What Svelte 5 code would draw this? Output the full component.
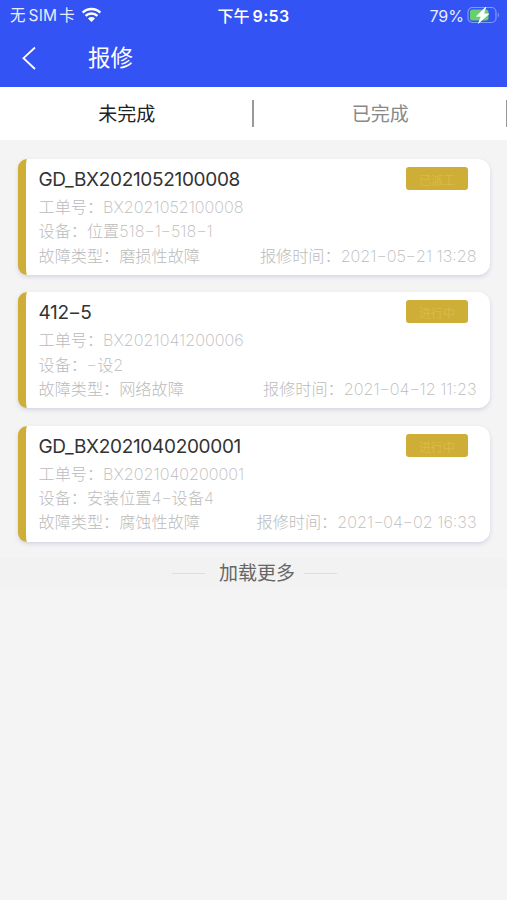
<script>
  const orders = [
    { title: 'GD_BX2021052100008', status: '已派工', no: 'BX2021052100008', device: '位置518-1-518-1', fault: '磨损性故障', time: '2021-05-21 13:28' },
    { title: '412-5', status: '进行中', no: 'BX2021041200006', device: '-设2', fault: '网络故障', time: '2021-04-12 11:23' },
    { title: 'GD_BX2021040200001', status: '进行中', no: 'BX2021040200001', device: '安装位置4-设备4', fault: '腐蚀性故障', time: '2021-04-02 16:33' }
  ];
</script>

<!-- Hyphens are drawn wider than the font's own -->
{#snippet wide(text)}{#each text.split('-') as part, i}{#if i}<span class="dash">-</span>{/if}{part}{/each}{/snippet}

<div class="screen">
  <header>
    <div class="status-bar">
      <div class="carrier">
        <span>无</span><span class="sim">SIM</span><span>卡</span>
        <svg class="wifi" width="21" height="16" viewBox="0 0 21 16">
          <path d="M1.7 5.6a12.6 12.6 0 0 1 17.6 0M4.6 8.8a8.4 8.4 0 0 1 11.8 0" fill="none" stroke="#fff" stroke-width="2.5" />
          <path d="M7 11.5a5 5 0 0 1 7 0L10.500 15z" fill="#fff" />
        </svg>
      </div>
      <div class="clock"><span>下午</span><b>9:53</b></div>
      <div class="power">
        <span>79%</span>
        <svg width="33" height="18" viewBox="0 0 33 18">
          <rect x="1" y="1.500" width="28" height="15" rx="4.500" fill="none" stroke="#8198ff" stroke-width="1.200" />
          <rect x="3" y="3.500" width="18.500" height="11" rx="2.500" fill="#65d06c" />
          <path d="M30.800 6.500c1.600.7 1.600 4.300 0 5z" fill="#8198ff" />
          <path d="M18.800 1 9.500 10.300h4.700L11.600 17.300 21.800 7.900h-5.200z" fill="#fff" stroke="#fff" stroke-width="0.800" />
        </svg>
      </div>
    </div>
    <div class="nav">
      <svg width="16" height="24" viewBox="0 0 16 24"><path d="M14 1.500 2.500 12.200 14 23" fill="none" stroke="#fff" stroke-width="1.800" /></svg>
      <h1>报修</h1>
    </div>
  </header>

  <div class="tabs">
    <div class="tab active"><span>未完成</span></div>
    <div class="tab"><span>已完成</span></div>
  </div>

  <main>
    {#each orders as o}
      <article>
        <div class="head">
          <h2>{@render wide(o.title)}</h2>
          <span class="badge">{o.status}</span>
        </div>
        <div class="row">工单号：<span>{o.no}</span></div>
        <div class="row">设备：<span>{@render wide(o.device)}</span></div>
        <div class="row"><span>故障类型：{o.fault}</span><span class="time">报修时间：{@render wide(o.time)}</span></div>
      </article>
    {/each}
  </main>

  <div class="more"><i></i><span>加载更多</span><i></i></div>
</div>

<style>
  :global(body) { background: #f4f4f4; }
  .screen { height: 900px; overflow: hidden; background: #f4f4f4; font-family: Inter, "Noto Sans CJK SC", sans-serif; }
  header { height: 87px; background: #3353f4; color: #fff; }
  .status-bar { height: 29px; display: grid; grid-template-columns: 1fr auto 1fr; align-items: center; font-size: 16px; line-height: 30px; color: #e9edff; }
  .carrier { display: flex; align-items: center; padding-left: 10px; font-size: 15.500px; line-height: 31px; }
  .sim { margin: 0 2px 0 3px; letter-spacing: 0.2px; }
  .wifi { margin: 0 0 1px 6px; }
  .clock { display: flex; gap: 3px; font-weight: 500; color: #fff; }
  .clock b { font-weight: 600; letter-spacing: 0.3px; }
  .power { display: flex; justify-content: flex-end; align-items: center; gap: 3px; padding-right: 7px; }
  .power svg { margin-top: -1px; }
  .nav { height: 58px; display: flex; align-items: center; padding-left: 21px; }
  h1 { margin: 0 0 0 51px; font-size: 22.500px; font-weight: 400; line-height: 58px; }
  .tabs { height: 53px; display: flex; background: #fff; }
  .tab { flex: 1; display: flex; align-items: center; justify-content: center; font-size: 19px; line-height: 24px; color: #888; }
  .tab span { padding-top: 3px; }
  .tab::after { content: ""; width: 1.500px; height: 27px; margin: 0 -0.500px 0 auto; background: #999; }
  .tab::before { content: ""; width: 1px; margin-right: auto; }
  .active { color: #222; }
  main { display: flex; flex-direction: column; gap: 17.300px; padding: 19px 17px 0 17.500px; }
  article { height: 116px; box-sizing: border-box; padding: 8px 13.500px 0 13px; border-left: 8.500px solid #cfae38; border-radius: 9px 12px 12px 9px; background: #fff; box-shadow: 0 2px 4px #d5d5e6; }
  .head { display: flex; justify-content: space-between; height: 28px; }
  h2 { margin: 0; font-size: 19px; line-height: 25px; font-weight: 400; letter-spacing: -0.320px; color: #333; }
  .badge { width: 62px; height: 23px; margin-right: 8.500px; border-radius: 3px; background: #cfae38; color: #dec04e; font-size: 12px; line-height: 27px; text-align: center; font-weight: 300; }
  .row { display: flex; height: 24.300px; line-height: 25px; font-size: 16.150px; font-weight: 200; color: #bbb; white-space: pre; }
  .dash { display: inline-block; margin: 0 1.500px; transform: scaleX(1.5); }
  .time { margin-left: auto; }
  .more { display: flex; align-items: center; justify-content: center; height: 31px; margin-top: 16px; padding-left: 2px; background: #f2f2f2; font-size: 19px; line-height: 31px; color: #666; }
  .more span { margin: 0 9px 0 14px; }
  .more i { width: 33px; height: 1px; background: #dedede; }
</style>
